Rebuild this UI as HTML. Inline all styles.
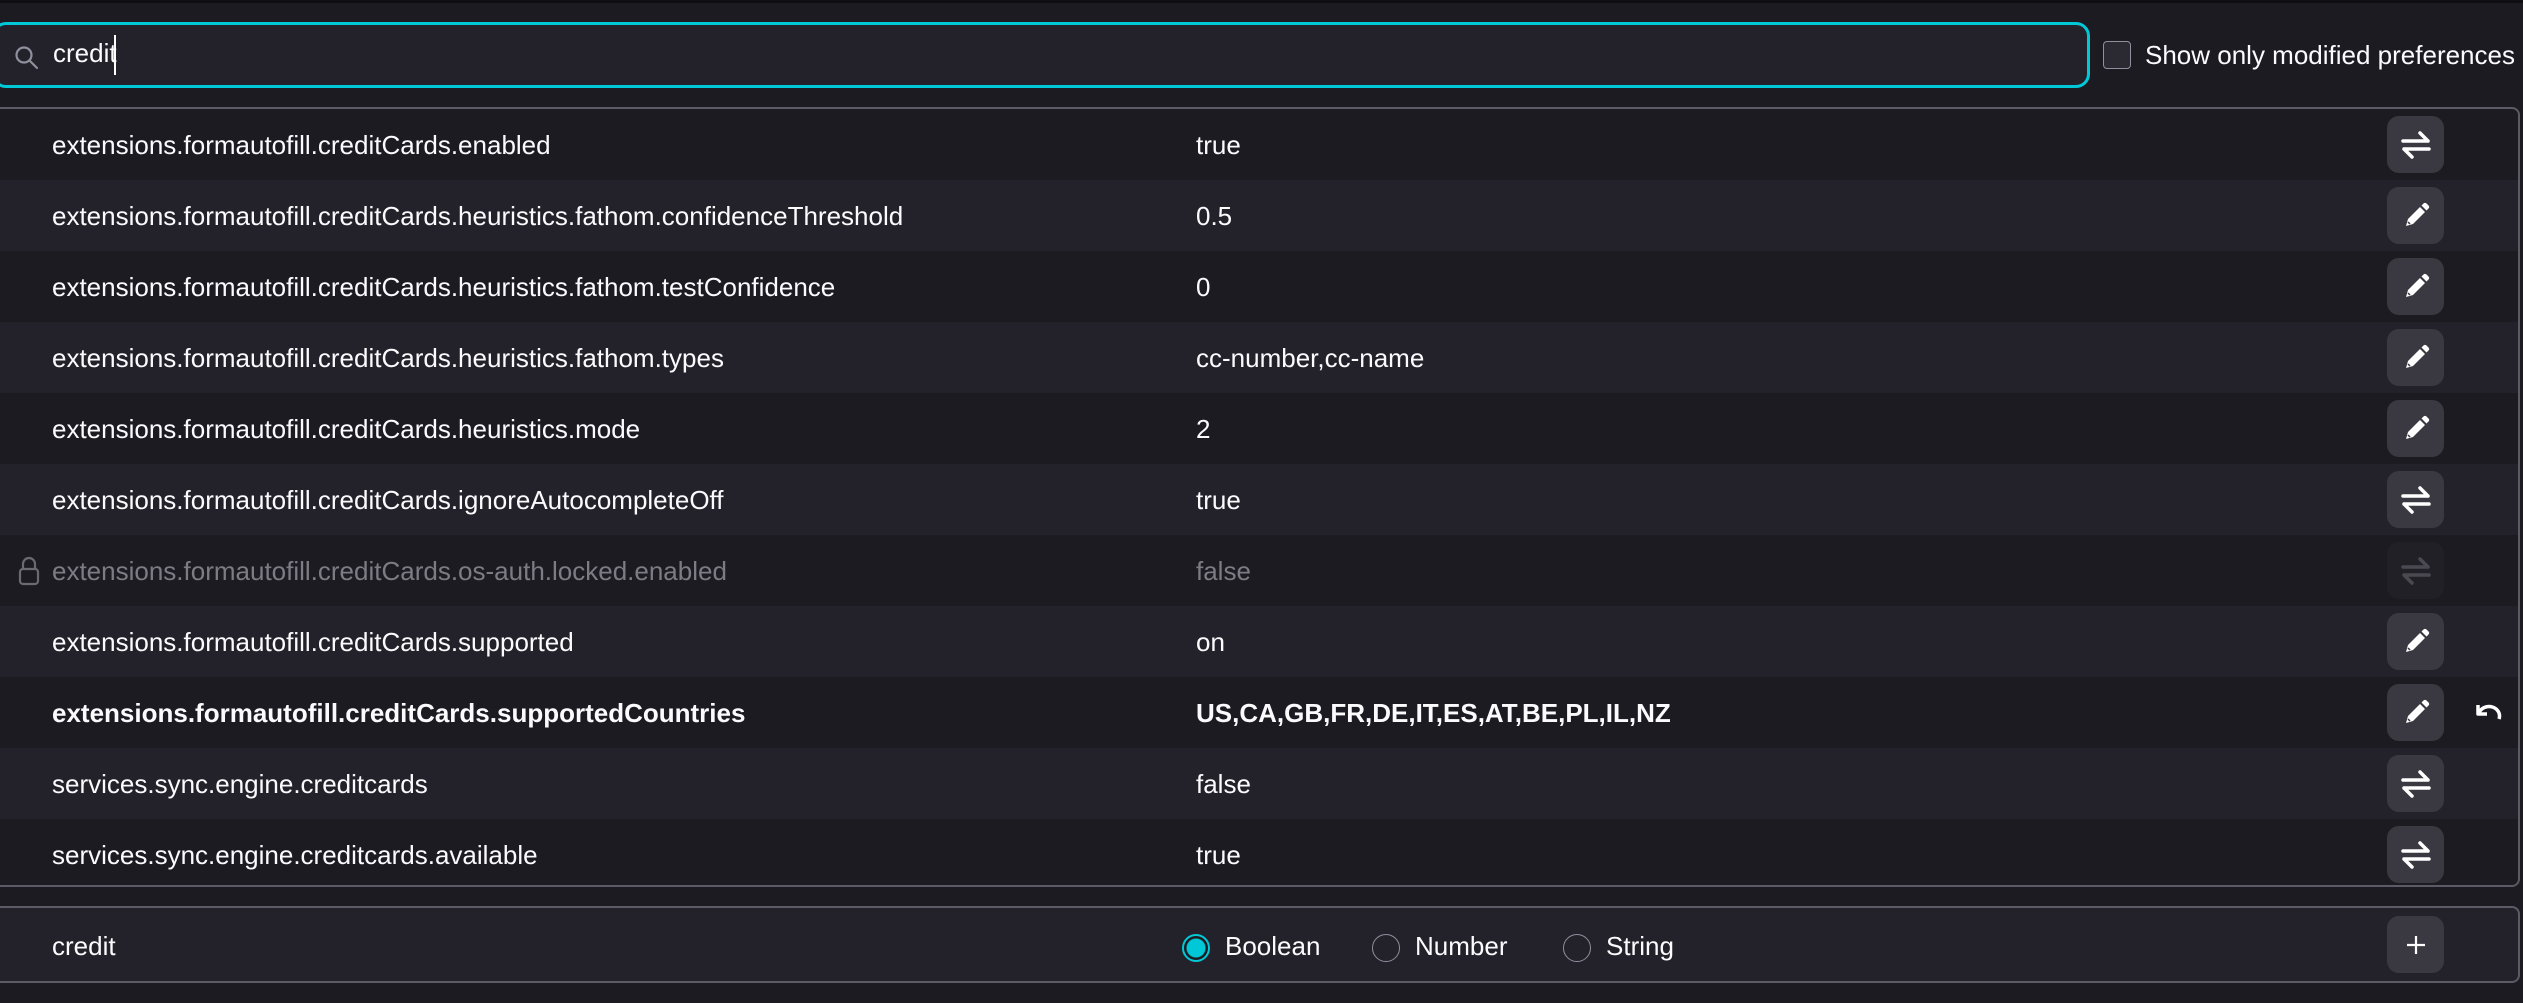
<!DOCTYPE html>
<html><head><meta charset="utf-8"><style>
*{box-sizing:border-box;margin:0;padding:0}
body{width:2523px;height:1003px;background:#1c1b22;font-family:"Liberation Sans",sans-serif;color:#fbfbfe;position:relative;overflow:hidden;font-size:26px}
.topline{position:absolute;left:0;top:0;width:2523px;height:3px;background:#0f0f12}
.search{position:absolute;left:-8px;top:22px;width:2098px;height:66px;border:3px solid #00c8d7;border-radius:14px;background:#23222b}
.search .t{position:absolute;left:58px;top:13px;font-size:26px}
.cb{position:absolute;left:2103px;top:41px;width:28px;height:28px;border:1.5px solid #8f8f9d;border-radius:4px;background:#2b2a33}
.cbl{position:absolute;left:2145px;top:40px;font-size:26px}
.table{position:absolute;left:-8px;top:107px;width:2528px;height:780px;border:2px solid #5b5b66;border-radius:8px;overflow:hidden}
.row{position:absolute;left:0;width:100%;height:71px}
.row.e{background:#23222b}
.row .n{position:absolute;left:58px;top:21px;white-space:nowrap}
.row .v{position:absolute;left:1202px;top:21px;white-space:nowrap}
.btn{position:absolute;left:2393px;top:7px;width:57px;height:57px;border-radius:12px;background:#3a3941;display:flex;align-items:center;justify-content:center}
.add{position:absolute;left:-8px;top:906px;width:2528px;height:77px;border:2px solid #5b5b66;border-radius:8px;background:#23222b}
.radio{position:absolute;top:26px;width:28px;height:28px;border-radius:50%;border:1.5px solid #8f8f9d}
.rl{position:absolute;top:23px}
</style></head><body>
<div class="topline"></div>
<div class="search">
<svg style="position:absolute;left:19px;top:20px" width="26" height="26" viewBox="0 0 26 26"><circle cx="10" cy="10" r="7.5" fill="none" stroke="#8f8f9d" stroke-width="2.2"/><line x1="15.5" y1="15.5" x2="23" y2="23" stroke="#8f8f9d" stroke-width="2.2" stroke-linecap="round"/></svg>
<span class="t">credit</span><span style="position:absolute;left:119px;top:10px;width:2px;height:40px;background:#fff"></span>
</div>
<div class="cb"></div><div class="cbl">Show only modified preferences</div>

<div class="table">
<div class="row" style="top:0"><span class="n">extensions.formautofill.creditCards.enabled</span><span class="v">true</span><div class="btn">TG</div></div>
<div class="row e" style="top:71px"><span class="n">extensions.formautofill.creditCards.heuristics.fathom.confidenceThreshold</span><span class="v">0.5</span><div class="btn">ED</div></div>
<div class="row" style="top:142px"><span class="n">extensions.formautofill.creditCards.heuristics.fathom.testConfidence</span><span class="v">0</span><div class="btn">ED</div></div>
<div class="row e" style="top:213px"><span class="n">extensions.formautofill.creditCards.heuristics.fathom.types</span><span class="v">cc-number,cc-name</span><div class="btn">ED</div></div>
<div class="row" style="top:284px"><span class="n">extensions.formautofill.creditCards.heuristics.mode</span><span class="v">2</span><div class="btn">ED</div></div>
<div class="row e" style="top:355px"><span class="n">extensions.formautofill.creditCards.ignoreAutocompleteOff</span><span class="v">true</span><div class="btn">TG</div></div>
<div class="row" style="top:426px;color:#7d7c85"><svg style="position:absolute;left:24px;top:21px" width="22" height="30" viewBox="0 0 22 30"><path d="M5 13V8a6 6 0 0 1 12 0v5" fill="none" stroke="#6b6a73" stroke-width="2.2"/><rect x="2" y="13" width="18" height="15" rx="3" fill="none" stroke="#6b6a73" stroke-width="2.2"/></svg><span class="n">extensions.formautofill.creditCards.os-auth.locked.enabled</span><span class="v">false</span><div class="btn" style="background:#212027">TGD</div></div>
<div class="row e" style="top:497px"><span class="n">extensions.formautofill.creditCards.supported</span><span class="v">on</span><div class="btn">ED</div></div>
<div class="row" style="top:568px;font-weight:bold"><span class="n">extensions.formautofill.creditCards.supportedCountries</span><span class="v">US,CA,GB,FR,DE,IT,ES,AT,BE,PL,IL,NZ</span><div class="btn">ED</div>
<svg style="position:absolute;left:2480px;top:24px" width="30" height="24" viewBox="0 0 30 24"><path d="M4 4v9h9" fill="none" stroke="#fff" stroke-width="3.5" stroke-linejoin="round"/><path d="M5 12a10 9 0 0 1 20 6" fill="none" stroke="#fff" stroke-width="3.5"/></svg></div>
<div class="row e" style="top:639px"><span class="n">services.sync.engine.creditcards</span><span class="v">false</span><div class="btn">TG</div></div>
<div class="row" style="top:710px"><span class="n">services.sync.engine.creditcards.available</span><span class="v">true</span><div class="btn">TG</div></div>
</div>

<div class="add">
<span style="position:absolute;left:58px;top:23px">credit</span>
<div class="radio" style="left:1188px;border:2px solid #00c8d7;background:radial-gradient(circle,#00c8d7 0 9px,#1c1b22 10px)"></div><span class="rl" style="left:1231px">Boolean</span>
<div class="radio" style="left:1378px"></div><span class="rl" style="left:1421px">Number</span>
<div class="radio" style="left:1569px"></div><span class="rl" style="left:1612px">String</span>
<div class="btn" style="left:2393px;top:8px"><svg width="24" height="24" viewBox="0 0 24 24"><path d="M12 3v18M3 12h18" stroke="#fff" stroke-width="2.2"/></svg></div>
</div>

<script>
var tg='<svg width="32" height="28" viewBox="0 0 32 28"><path d="M3 10h25M20 2l8 8" fill="none" stroke="C" stroke-width="3.5" stroke-linecap="round"/><path d="M29 18H4M12 26l-8-8" fill="none" stroke="C" stroke-width="3.5" stroke-linecap="round"/></svg>';
var ed='<svg width="28" height="28" viewBox="0 0 28 28"><path d="M4 24l2-7L18 5l5 5-12 12z" fill="#fff"/><path d="M19.5 3.5l2-2a2 2 0 0 1 3 0l2 2a2 2 0 0 1 0 3l-2 2z" fill="#fff"/><path d="M6 20l2 2" stroke="#3a3941" stroke-width="1.5"/></svg>';
document.querySelectorAll('.btn').forEach(function(b){var t=b.textContent;if(t==='TG')b.innerHTML=tg.replace(/C/g,'#fff');else if(t==='TGD')b.innerHTML=tg.replace(/C/g,'#4a4951');else if(t==='ED')b.innerHTML=ed;});
</script>
</body></html>
